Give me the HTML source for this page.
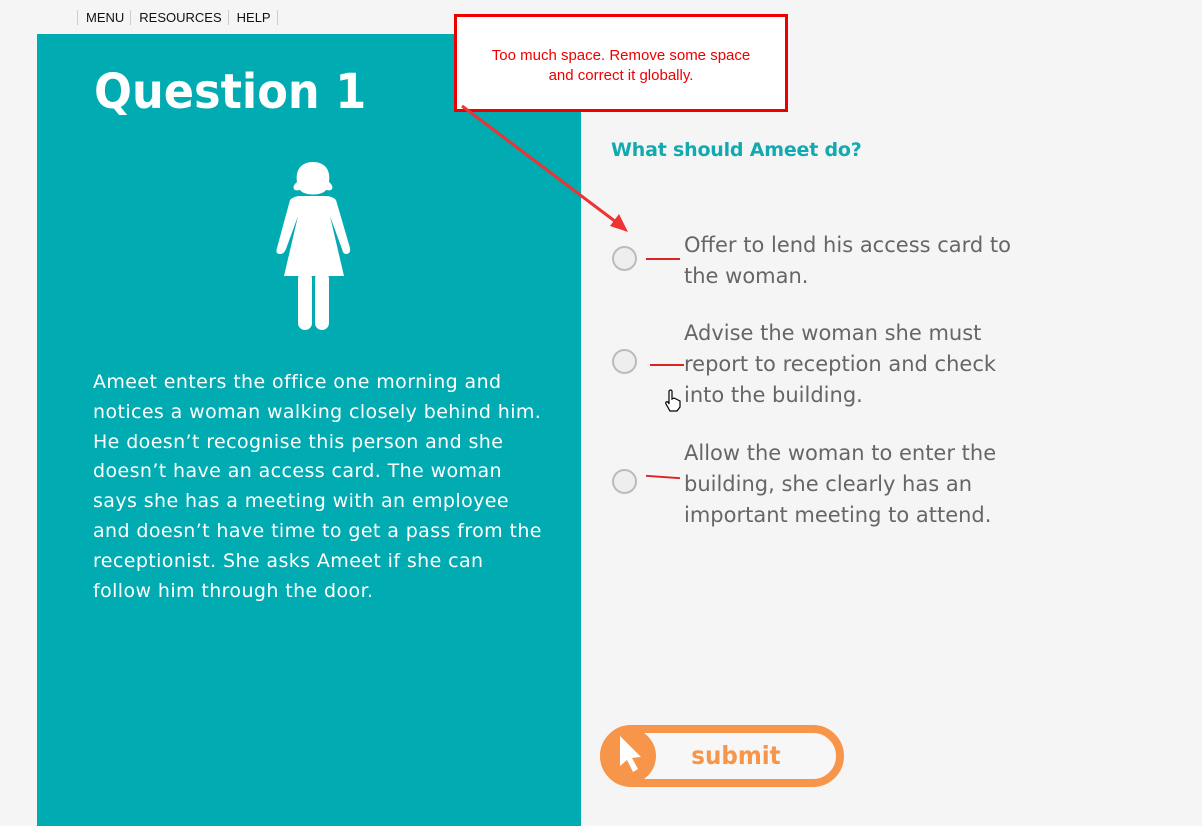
<!DOCTYPE html>
<html><head><meta charset="utf-8"><style>
body{margin:0;width:1202px;height:826px;background:#f5f5f5;position:relative;overflow:hidden;font-family:"DejaVu Sans","Liberation Sans",sans-serif}
.nav{position:absolute;top:10px;left:77px;font:13px "Liberation Sans",sans-serif;color:#111}
.nav span{border-left:1px solid #ccc;padding:0 6px 0 8px}
.nav span:last-child{border-right:1px solid #ccc}
.panel{position:absolute;left:37px;top:34px;width:544px;height:792px;background:#00abb1}
h1{position:absolute;left:94px;top:64px;margin:0;font:bold 48px "DejaVu Sans",sans-serif;color:#fff;letter-spacing:0;transform:scaleX(0.93);transform-origin:left top}
.story{position:absolute;left:93px;top:368px;white-space:nowrap;color:#fff;font-size:19px;line-height:29.8px;letter-spacing:0.4px}
.q{position:absolute;left:611px;top:139px;color:#12a9b0;font-weight:bold;font-size:19px;letter-spacing:-0.2px}
.opt{position:absolute;left:684px;color:#666;font-size:21px;line-height:31px;letter-spacing:0}
.r{position:absolute;left:612px;width:25px;height:25px;border:2.5px solid #bbb;border-radius:50%;background:#eee;box-sizing:border-box}
.d{position:absolute;height:2px;width:34px;background:#d22}
.note{position:absolute;left:454px;top:14px;width:334px;height:98px;box-sizing:border-box;border:3px solid #e00;background:#fff;color:#e00;font:15px "Liberation Sans",sans-serif;text-align:center;padding-top:29px;line-height:20px}
</style></head><body>
<div class="nav"><span>MENU</span><span>RESOURCES</span><span>HELP</span></div>
<div class="panel"></div>
<h1>Question 1</h1>
<svg style="position:absolute;left:270px;top:160px" width="90" height="172" viewBox="0 0 90 172">
<g fill="#fff">
<path d="M30 30 C22 32 22 26 27 22 C25 8 33 2 43 2 C53 2 61 8 59 22 C64 26 64 32 56 30 C52 36 34 36 30 30Z"/>
<path d="M20 40 Q24 36 30 36 L56 36 Q62 36 66 40 L80 88 Q81 94 76 94 Q73 94 72 89 L60 56 L74 116 L14 116 L28 56 L16 89 Q14 94 10 94 Q5 94 7 88Z"/>
<rect x="28" y="112" width="14" height="58" rx="7"/>
<rect x="45" y="112" width="14" height="58" rx="7"/>
</g></svg>
<div class="story">Ameet enters the office one morning and<br>notices a woman walking closely behind him.<br>He doesn’t recognise this person and she<br>doesn’t have an access card. The woman<br>says she has a meeting with an employee<br>and doesn’t have time to get a pass from the<br>receptionist. She asks Ameet if she can<br>follow him through the door.</div>
<div class="q">What should Ameet do?</div>
<div class="r" style="top:246px"></div><div class="d" style="left:646px;top:258px"></div>
<div class="opt" style="top:230px">Offer to lend his access card to<br>the woman.</div>
<div class="r" style="top:349px"></div><div class="d" style="left:650px;top:364px"></div>
<div class="opt" style="top:318px">Advise the woman she must<br>report to reception and check<br>into the building.</div>
<div class="r" style="top:469px"></div><div class="d" style="left:646px;top:476px;transform:rotate(4deg)"></div>
<div class="opt" style="top:438px">Allow the woman to enter the<br>building, she clearly has an<br>important meeting to attend.</div>
<svg style="position:absolute;left:664px;top:389px" width="18" height="24" viewBox="0 0 18 24"><path d="M5 2 Q7 0 8 2 L8 10 L10 9 L12 10 L14 11 L16 12 L16 18 L13 22 L6 22 L2 15 Q1 12 4 13 L5 15Z" fill="#fff" stroke="#000" stroke-width="1.2"/></svg>
<svg style="position:absolute;left:598px;top:724px" width="250" height="64">
<rect x="6" y="5" width="236" height="54" rx="27" fill="#f7f7f7" stroke="#f7964a" stroke-width="8"/>
<circle cx="30" cy="32" r="28" fill="#f7964a"/>
<path d="M22 12 L22 42 L29 36 L35 48 L40 45 L34 34 L43 33Z" fill="#fff"/>
<text x="138" y="40" text-anchor="middle" font-family="DejaVu Sans" font-weight="bold" font-size="25" fill="#f7964a" transform="translate(138 0) scale(0.92 1) translate(-138 0)">submit</text>
</svg>
<div class="note">Too much space. Remove some space<br>and correct it globally.</div>
<svg style="position:absolute;left:0;top:0" width="1202" height="826"><line x1="462" y1="106" x2="620" y2="225" stroke="#e33" stroke-width="3"/><path d="M628 232 L610 226 L619 214Z" fill="#e33"/></svg>
</body></html>
